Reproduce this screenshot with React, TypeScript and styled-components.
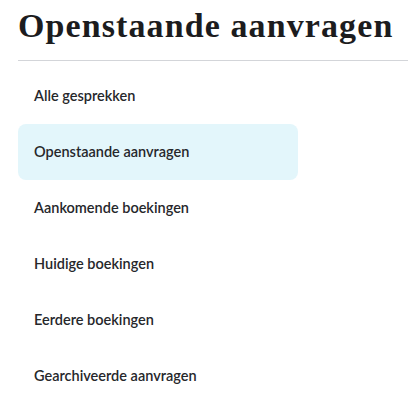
import React from "react";
import styled, { createGlobalStyle } from "styled-components";

const GlobalStyle = createGlobalStyle`
  body {
    margin: 0;
    background: #ffffff;
  }
`;

const Page = styled.div`
  width: 408px;
  height: 406px;
  overflow: hidden;
  padding: 8px 0 0 18px;
  box-sizing: border-box;
`;

const Title = styled.h1`
  margin: 0;
  font-family: "Liberation Serif", "DejaVu Serif", serif;
  font-weight: 700;
  font-size: 34px;
  letter-spacing: 1.1px;
  line-height: 36px;
  color: #1c1c1e;
  white-space: nowrap;
`;

const Divider = styled.hr`
  margin: 16px 0 7px;
  border: 0;
  border-top: 1px solid #d3d5d9;
`;

const Menu = styled.ul`
  list-style: none;
  margin: 0;
  padding: 0;
  width: 280px;
`;

const Item = styled.li<{ $active?: boolean }>`
  height: 56px;
  display: flex;
  align-items: center;
  padding: 0 16px 1px;
  box-sizing: border-box;
  border-radius: 8px;
  background: ${(p) => (p.$active ? "#e3f6fb" : "transparent")};
  font-family: Lato, "Noto Sans", sans-serif;
  font-weight: 600;
  font-size: 14.5px;
  color: #26272b;
`;

const items = [
  "Alle gesprekken",
  "Openstaande aanvragen",
  "Aankomende boekingen",
  "Huidige boekingen",
  "Eerdere boekingen",
  "Gearchiveerde aanvragen",
];

export default function App() {
  return (
    <>
      <GlobalStyle />
      <Page>
        <Title>Openstaande aanvragen</Title>
        <Divider />
        <Menu>
          {items.map((label) => (
            <Item key={label} $active={label === "Openstaande aanvragen"}>
              {label}
            </Item>
          ))}
        </Menu>
      </Page>
    </>
  );
}
